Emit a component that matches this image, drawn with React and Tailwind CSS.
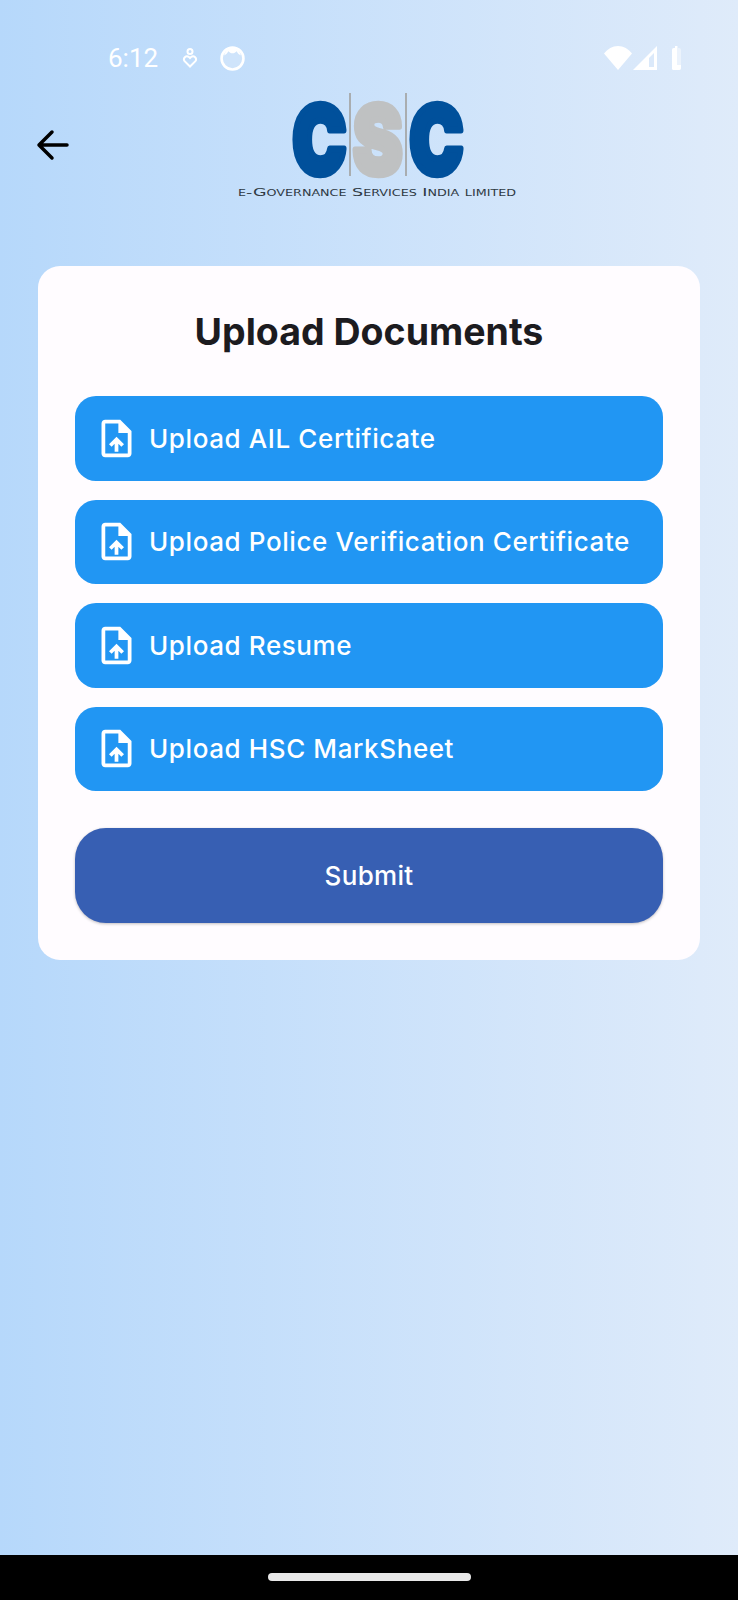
import React from 'react';

const UploadIcon = () => (
  <svg width="45" height="45" viewBox="0 0 24 24" fill="white" className="shrink-0">
    <path d="M14 2H6c-1.1 0-1.99.9-1.99 2L4 20c0 1.1.89 2 1.99 2H18c1.1 0 2-.9 2-2V8l-6-6zm4 18H6V4h7v5h5v11zM8 15.01l1.41 1.41L11 14.84V19h2v-4.16l1.59 1.59L16 15.01 12.01 11z" />
  </svg>
);

const Logo = () => (
  <svg width="280" height="108" viewBox="0 0 280 108">
    <g fontFamily="Inter, sans-serif" fontWeight="900" fontSize="100" strokeWidth="7" strokeLinejoin="round">
      <text transform="translate(55.500 80.500) scale(0.72 0.95)" fill="#00509b" stroke="#00509b">C</text>
      <text transform="translate(116 80.500) scale(0.74 0.95)" fill="#bfc1c2" stroke="#bfc1c2">S</text>
      <text transform="translate(172.500 80.500) scale(0.72 0.95)" fill="#00509b" stroke="#00509b">C</text>
    </g>
    <rect x="112" y="0" width="2" height="83" fill="#a9adb0" />
    <rect x="168" y="0" width="2" height="83" fill="#a9adb0" />
    <text
      x="1"
      y="103"
      fontFamily="'DejaVu Sans', sans-serif"
      fontSize="11"
      fontVariant="small-caps"
      fill="#2f3a44"
      textLength="278"
      lengthAdjust="spacingAndGlyphs"
    >
      e-Governance Services India limited
    </text>
  </svg>
);

const StatusBar = () => (
  <div className="flex h-[50px] items-center justify-between pl-[108px] pr-[56px] text-white">
    <div className="flex items-center">
      <span className="font-['Roboto',sans-serif] text-[26px] leading-none">6:12</span>
      <svg width="16" height="20" viewBox="0 0 16 20" fill="none" stroke="white" strokeWidth="2" className="ml-[24px]">
        <circle cx="8" cy="3.500" r="2.500" />
        <path d="M8 18.500 2.600 13.100a3 3 0 0 1 4.200-4.200L8 10.100l1.200-1.200a3 3 0 0 1 4.200 4.200z" />
      </svg>
      <svg width="25" height="25" viewBox="0 0 24 24" className="ml-[22px]">
        <circle cx="12" cy="12" r="10.500" fill="white" fillOpacity="0.2" stroke="white" strokeWidth="2.500" />
        <path d="M4 9c1.500-.5 3-2 4-4 1 1 2.500 2 4 2s3-1 4-2c1 2 2.500 3.500 4 4-1-5-5-7-8-7S5 4 4 9z" fill="white" />
      </svg>
    </div>
    <div className="flex items-center">
      <svg width="28" height="24" viewBox="0 0 28 24" fill="white">
        <path d="M0 7.500C3.500 3 8.500 0 14 0s10.500 3 14 7.500L14 24z" />
      </svg>
      <svg width="24" height="24" viewBox="0 0 24 24" className="ml-[1px]">
        <path d="M0 24 24 0v24z" fill="white" />
        <path d="M16 21h5V7l-5 5z" fill="#dbe9fa" />
      </svg>
      <svg width="11" height="24" viewBox="0 0 11 24" fill="white" className="ml-[14px]">
        <path d="M3 2h1V0h3v2h1a2 2 0 0 1 2 2v18a2 2 0 0 1-2 2H3a2 2 0 0 1-2-2V4a2 2 0 0 1 2-2z" fillOpacity="0.45" />
        <path d="M1 19h9v3a2 2 0 0 1-2 2H3a2 2 0 0 1-2-2z" />
        <path d="M3 2h1V0h2v24H3a2 2 0 0 1-2-2V4a2 2 0 0 1 2-2z" />
      </svg>
    </div>
  </div>
);

const documents = [
  'Upload AIL Certificate',
  'Upload Police Verification Certificate',
  'Upload Resume',
  'Upload HSC MarkSheet',
];

export default function App() {
  return (
    <div className="flex h-[1600px] w-[738px] flex-col overflow-hidden bg-black font-['Inter',sans-serif]">
      <div className="flex h-[1555px] flex-col bg-gradient-to-r from-[#b6d8fb] to-[#dfebfa] pt-[33px]">
        <StatusBar />

        {/* Header */}
        <div className="mt-[10px] flex h-[106px] items-start pl-[36px]">
          <svg width="34" height="34" viewBox="0 0 34 34" fill="none" stroke="black" strokeWidth="3.500" strokeLinecap="round" strokeLinejoin="round" className="mt-[35px]">
            <path d="M31 17H3M16 4 3 17l13 13" />
          </svg>
          <div className="ml-[167px]">
            <Logo />
          </div>
        </div>

        {/* Card */}
        <div className="mx-[38px] mt-[67px] rounded-[22px] bg-[#fffcff] px-[37px] pb-[37px] pt-[39px]">
          <h1 className="text-center text-[37.5px] font-bold leading-[53px] text-[#1c1b1f]">Upload Documents</h1>

          <div className="mt-[38px] flex flex-col gap-[19px]">
            {documents.map((label) => (
              <button key={label} className="flex h-[84.500px] items-center rounded-[21px] bg-[#2196f3] pl-[19px] text-white">
                <UploadIcon />
                <span className="ml-[10px] whitespace-nowrap text-[26px] font-medium tracking-[0.6px]">{label}</span>
              </button>
            ))}
          </div>

          <button className="mt-[37px] flex h-[94.500px] w-full items-center justify-center rounded-[31px] bg-[#375fb3] text-[26px] font-medium tracking-[0.3px] text-white shadow-[0_1px_3px_rgba(0,0,0,0.25)]">
            Submit
          </button>
        </div>
      </div>

      {/* Nav bar */}
      <div className="flex flex-1 items-center justify-center pb-[2px]">
        <div className="h-[8px] w-[203px] rounded-full bg-[#e8e8e8]" />
      </div>
    </div>
  );
}
